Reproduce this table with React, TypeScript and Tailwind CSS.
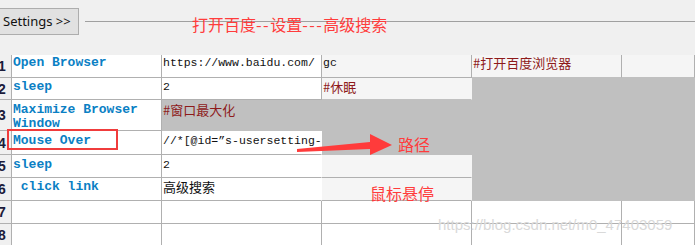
import React from "react";

type Kind = "white" | "light" | "gray" | "head";
type Txt = "kw" | "mono" | "cjk" | "cjkred" | "none";

interface Cell {
  kind: Kind;
  text?: string;
  t?: Txt;
  br?: boolean; // hide right border
  bb?: boolean; // soften bottom border
}

const kindCls: Record<Kind, string> = {
  white: "bg-white border-r border-b border-[#b0b0b0]",
  light: "bg-[#f5f5f5] border-r border-b border-[#b0b0b0]",
  gray: "bg-[#c0c0c0] border-r border-b border-[#c0c0c0]",
  head: "bg-[#f0f0f0] border-r border-b border-[#b0b0b0]",
};

const txtCls: Record<Txt, string> = {
  kw: "font-['Liberation_Mono',monospace] font-bold text-[13px] leading-[14px] text-[#0a80c4] whitespace-pre pl-[1px]",
  mono: "font-['Liberation_Mono',monospace] text-[11.5px] leading-[14px] text-[#111] whitespace-pre pl-[1px]",
  cjk: "font-['Noto_Sans_CJK_SC',sans-serif] text-[13px] leading-[14px] text-[#111] whitespace-pre pl-[1px]",
  cjkred: "font-['Noto_Sans_CJK_SC',sans-serif] text-[13px] leading-[14px] text-[#8e1a1a] whitespace-pre pl-[1px]",
  none: "",
};

const padCls = ["pt-[1px]", "pt-[2px]", "pt-[3px]", "pt-[3px]", "pt-[3px]", "pt-[2px]", "pt-[2px]", "pt-[2px]"];

const rows: Cell[][] = [
  [
    { kind: "white", text: "Open Browser", t: "kw" },
    { kind: "white", text: "https://www.baidu.com/", t: "mono" },
    { kind: "light", text: "gc", t: "mono" },
    { kind: "light", text: "#打开百度浏览器", t: "cjkred", bb: true },
    { kind: "light", bb: true },
  ],
  [
    { kind: "white", text: "sleep", t: "kw" },
    { kind: "white", text: "2", t: "mono" },
    { kind: "light", text: "#休眠", t: "cjkred", br: true, bb: true },
    { kind: "gray" },
    { kind: "gray" },
  ],
  [
    { kind: "white", text: "Maximize Browser\nWindow", t: "kw" },
    { kind: "gray", text: "#窗口最大化", t: "cjkred" },
    { kind: "gray" },
    { kind: "gray" },
    { kind: "gray" },
  ],
  [
    { kind: "white", text: "Mouse Over", t: "kw" },
    { kind: "white", text: "//*[@id=\u201ds-usersetting-config\u201d]", t: "mono", br: true },
    { kind: "gray" },
    { kind: "gray" },
    { kind: "gray" },
  ],
  [
    { kind: "white", text: "sleep", t: "kw" },
    { kind: "white", text: "2", t: "mono", br: true },
    { kind: "light", br: true },
    { kind: "gray" },
    { kind: "gray" },
  ],
  [
    { kind: "white", text: " click link", t: "kw" },
    { kind: "white", text: "高级搜索", t: "cjk", br: true },
    { kind: "light", br: true },
    { kind: "gray" },
    { kind: "gray" },
  ],
  [
    { kind: "white" },
    { kind: "white" },
    { kind: "white" },
    { kind: "white" },
    { kind: "white" },
  ],
  [
    { kind: "white" },
    { kind: "white" },
    { kind: "white" },
    { kind: "white" },
    { kind: "white" },
  ],
];

export default function App() {
  return (
    <div className="relative w-[695px] h-[245px] overflow-hidden bg-[#f0f0f0]">
      {/* toolbar */}
      <div className="flex items-center pt-[8px] h-[35px]">
        <div className="-ml-[1px] w-[80px] h-[27px] flex items-center pl-[3px] bg-[#e1e1e1] border border-[#adadad] font-['Noto_Sans',sans-serif] text-[13px] text-[#111]">
          Settings &gt;&gt;
        </div>
        <div className="ml-[6px] flex-1 h-px bg-[#a0a0a0] -mt-[1px]" />
      </div>

      {/* grid */}
      <div className="mt-[20px] grid grid-cols-[12px_150px_160px_150px_150px_73px] grid-rows-[23px_22px_31px_24px_23px_23px_23px_23px]">
        {rows.map((r, ri) => (
          <React.Fragment key={ri}>
            <div className={`${kindCls.head} overflow-hidden flex items-center`}>
              <span className="-ml-[2px] font-['Liberation_Sans',sans-serif] font-bold text-[14px] leading-[14px] text-[#1b1b3a]">
                {ri + 1}
              </span>
            </div>
            {r.map((c, ci) => (
              <div
                key={ci}
                className={`${kindCls[c.kind]} ${c.br ? "border-r-transparent" : ""} ${c.bb ? "border-b-[#c0c0c0]" : ""} overflow-hidden ${ri === 2 ? "pt-[3px]" : padCls[ri]}`}
              >
                {c.text && (
                  <div className={`${txtCls[c.t ?? "none"]} ${ri === 2 && c.t === "kw" ? "leading-[12px]" : ""}`}>
                    {c.text}
                  </div>
                )}
              </div>
            ))}
          </React.Fragment>
        ))}
      </div>

      {/* annotations */}
      <div className="absolute left-[192px] top-[16px] font-['Noto_Sans_CJK_SC',sans-serif] text-[16px] leading-[16px] text-[#ff3c3c] whitespace-pre">
        打开百度<span className="tracking-[1.5px]">--</span>设置<span className="tracking-[1.5px]">---</span>高级搜索
      </div>
      <div className="absolute left-[7px] top-[129px] w-[111px] h-[21px] border-2 border-[#f03c3c]" />
      <svg className="absolute left-0 top-0 pointer-events-none" width="695" height="245" viewBox="0 0 695 245">
        <polygon points="297,149 370,142 370,134 392,145 370,155 370,149 297,152" fill="#ff3b3b" />
      </svg>
      <div className="absolute left-[398px] top-[136px] font-['Noto_Sans_CJK_SC',sans-serif] text-[16px] leading-[16px] text-[#ff3c3c]">
        路径
      </div>
      <div className="absolute left-[370px] top-[185px] font-['Noto_Sans_CJK_SC',sans-serif] text-[16px] leading-[16px] text-[#ff3c3c]">
        鼠标悬停
      </div>
      <div className="absolute left-[438px] top-[216px] font-['Liberation_Sans',sans-serif] text-[15px] leading-[18px] text-[#d9d9d9] whitespace-pre">
        https://blog.csdn.net/m0_47403059
      </div>
    </div>
  );
}
